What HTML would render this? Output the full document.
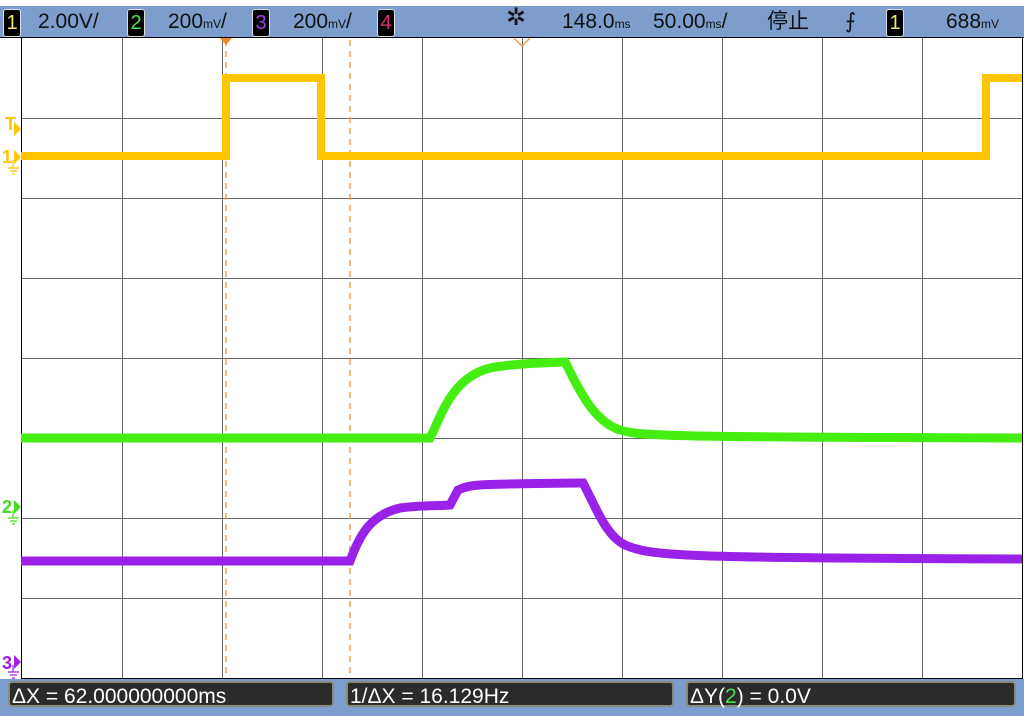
<!DOCTYPE html><html><head><style>
body{margin:0;width:1024px;height:716px;background:#fff;overflow:hidden;position:relative;font-family:"Liberation Sans","Noto Sans CJK SC",sans-serif}
.top{position:absolute;left:0;top:6px;width:1024px;height:31px;background:#7d9dcd;border-bottom:1px solid #000}
.t{position:absolute;top:5px;font-size:21px;color:#111;line-height:22px}
.b{position:absolute;top:3px;width:16px;height:26px;background:#000;border:1px solid #ddd;border-radius:3px;font-size:20px;line-height:26px;text-align:center}
.bot{position:absolute;left:0;top:679px;width:1024px;height:37px;background:#7d9dcd}
.bx{position:absolute;top:2px;height:26px;background:#2b2b2b;border:2px solid #8a8a7a;border-radius:4px;color:#fff;font-size:21px;line-height:27px;padding-left:2px;box-sizing:border-box}
</style></head><body>
<div class="top">
<div class="b" style="left:3px;color:#f5e66a">1</div><div class="t" style="left:38px">2.00V/</div>
<div class="b" style="left:127px;color:#4ee04e">2</div><div class="t" style="left:168px">200<small style="font-size:12px">mV</small>/</div>
<div class="b" style="left:252px;color:#a040e0">3</div><div class="t" style="left:293px">200<small style="font-size:12px">mV</small>/</div>
<div class="b" style="left:377px;color:#e0306a">4</div>
<div class="t" style="left:506px;top:1px;font-size:24px">✲</div>
<div class="t" style="left:562px">148.0<small style="font-size:12px">ms</small></div>
<div class="t" style="left:653px">50.00<small style="font-size:12px">ms</small>/</div>
<div class="t" style="left:767px">停止</div>
<div class="t" style="left:845px">⨍</div>
<div class="b" style="left:886px;color:#f5e66a">1</div>
<div class="t" style="left:946px">688<small style="font-size:12px">mV</small></div>
</div>
<svg style="position:absolute;left:0;top:0" width="1024" height="716">
<g stroke="#666" stroke-width="1">
<path d="M21 118.5H1022M21 198.5H1022M21 278.5H1022M21 358.5H1022M21 438.5H1022M21 518.5H1022M21 598.5H1022"/>
<path d="M122.5 38V678M222.5 38V678M322.5 38V678M422.5 38V678M522.5 38V678M622.5 38V678M722.5 38V678M822.5 38V678M922.5 38V678"/>
</g>
<path d="M21.5 38V678M1022.5 38V678M21 678.5H1023" stroke="#000"/>
<g stroke="#e8a050" stroke-width="1.5" stroke-dasharray="6,5"><path d="M226 40V678M350 40V678"/></g>
<path d="M220 38L232 38L226 45Z" fill="#f08a20"/>
<path d="M514 38L522 46L530 38" fill="none" stroke="#e8a050" stroke-width="1.5"/>
<path d="M21 156H226V78H321V156H986V78H1022" fill="none" stroke="#ffc400" stroke-width="8"/>
<path d="M21 438H430C440 420 450 378 490 368C510 364 540 363 565 362C575 380 590 420 620 430C640 436 660 437 1022 438" fill="none" stroke="#44ee10" stroke-width="9"/>
<path d="M21 561H350C360 535 370 515 400 508C420 505 440 506 450 505L458 490C470 484 480 484 583 483C595 505 605 535 625 545C650 556 680 558 1022 559" fill="none" stroke="#9a22e8" stroke-width="9"/>
<text x="5" y="130" fill="#ffc400" font-size="18" font-weight="bold">T</text><path d="M14 122L21 129L14 136Z" fill="#ffc400"/>
<text x="2" y="163" fill="#ffc400" font-size="18" font-weight="bold">1</text><path d="M14 150L21 157L14 164Z" fill="#ffc400"/>
<path d="M13 160V168M8 168H19M10 171H17M12 174H15" stroke="#ffc400" stroke-width="1.2"/>
<text x="2" y="513" fill="#44dd20" font-size="18" font-weight="bold">2</text><path d="M14 500L21 507L14 514Z" fill="#44dd20"/>
<path d="M13 510V518M8 518H19M10 521H17M12 524H15" stroke="#44dd20" stroke-width="1.2"/>
<text x="2" y="669" fill="#9a22e8" font-size="18" font-weight="bold">3</text><path d="M14 655L21 662L14 669Z" fill="#9a22e8"/>
<path d="M13 665V672M8 672H19M10 675H17M12 678H15" stroke="#9a22e8" stroke-width="1.2"/>
</svg>
<div class="bot">
<div class="bx" style="left:8px;width:326px">ΔX = 62.000000000ms</div>
<div class="bx" style="left:346px;width:328px">1/ΔX = 16.129Hz</div>
<div class="bx" style="left:686px;width:330px">ΔY(<span style="color:#4ee04e">2</span>) = 0.0V</div>
</div>
</body></html>
